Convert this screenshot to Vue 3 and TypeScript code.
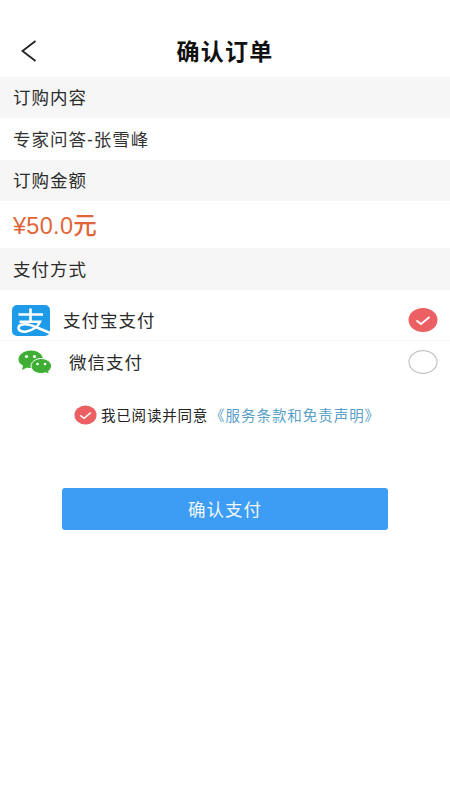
<script setup lang="ts">
const sections = { content: '专家问答-张雪峰', price: '¥50.0元' }
</script>

<template>
  <div class="page">
    <header class="nav">
      <svg class="back" viewBox="0 0 18 24" width="18" height="24" aria-hidden="true">
        <path d="M15.5 2 L2.5 12 L15.5 22" fill="none" stroke="#222" stroke-width="1.8" />
      </svg>
      <h1 class="title">确认订单</h1>
    </header>

    <div class="band">订购内容</div>
    <div class="line">{{ sections.content }}</div>
    <div class="band">订购金额</div>
    <div class="line price">{{ sections.price }}</div>
    <div class="band tall">支付方式</div>

    <div class="pay">
      <div class="pay-row ali">
        <svg class="ali-icon" viewBox="0 0 38 31" width="38" height="31" aria-hidden="true">
          <rect width="38" height="31" rx="5" fill="#1e9be8" />
          <path d="M6.5 9.5 H31 M18.5 3.5 V16.5 M7.5 16.8 H28 C26 21.5 20.5 25.5 14.5 26.5 C10 27.2 6.5 25.6 6.5 23 C6.5 20 11 18.6 16 19.6 C22 20.8 29 24.4 38 28"
            fill="none" stroke="#fff" stroke-width="2.6" />
        </svg>
        <span class="pay-name shift">支付宝支付</span>
        <svg class="radio" viewBox="0 0 30 24" width="30" height="24" aria-hidden="true">
          <ellipse cx="15" cy="12" rx="14.5" ry="12" fill="#ec5f63" />
          <path d="M8.5 12.5 L13 16 L21.5 9" fill="none" stroke="#fff" stroke-width="1.8" />
        </svg>
      </div>
      <div class="pay-row wx">
        <svg class="wx-icon" viewBox="0 0 34 24" width="34" height="24" aria-hidden="true">
          <path d="M13 0.5 C20 0.5 25 4.5 25 9.5 C25 14.5 20 18 13 18 C11.5 18 10 17.8 9 17.4 L4 20 L5 15.5 C2 14 0.5 12 0.5 9.5 C0.5 4.5 6 0.5 13 0.5 Z" fill="#3fae35" />
          <path d="M23 8.5 C29 8.5 33.5 12 33.5 16 C33.5 18.2 32.3 20 30.5 21.2 L31.5 24 L27.5 22.8 C26 23.3 24.6 23.5 23 23.5 C17.5 23.5 13 20.2 13 16 C13 12 17.5 8.5 23 8.5 Z" fill="#3fae35" stroke="#fff" stroke-width="1" />
          <circle cx="8.5" cy="6.5" r="1.6" fill="#fff" />
          <circle cx="16.5" cy="6.5" r="1.6" fill="#fff" />
          <circle cx="19.5" cy="14" r="1.3" fill="#fff" />
          <circle cx="27" cy="14" r="1.3" fill="#fff" />
        </svg>
        <span class="pay-name">微信支付</span>
        <svg class="radio" viewBox="0 0 30 24" width="30" height="24" aria-hidden="true">
          <ellipse cx="15" cy="12" rx="14" ry="11.4" fill="#fff" stroke="#c4c4c4" stroke-width="1.2" />
        </svg>
      </div>
    </div>

    <div class="agree">
      <svg viewBox="0 0 24 20" width="23" height="20" aria-hidden="true">
        <ellipse cx="12" cy="10" rx="11.5" ry="10" fill="#ec5f63" />
        <path d="M6.5 10.5 L10.5 13.5 L17.5 7.5" fill="none" stroke="#fff" stroke-width="1.6" />
      </svg>
      <span class="agree-text">我已阅读并同意</span>
      <span class="agree-link">《服务条款和免责声明》</span>
    </div>

    <button class="submit" type="button">确认支付</button>
  </div>
</template>

<style scoped>
.page {
  width: 450px;
  height: 800px;
  background: #fff;
  font-family: "Liberation Sans", "Noto Sans CJK SC", sans-serif;
  color: #2b2b2b;
  display: flex;
  flex-direction: column;
  overflow: hidden;
}
.nav {
  height: 77px;
  flex: none;
  display: grid;
  grid-template-columns: 1fr auto 1fr;
  align-items: center;
  padding-top: 25px;
  box-sizing: border-box;
}
.back {
  margin-left: 20px;
}
.title {
  margin: -3px 0 0;
  font-size: 23px;
  font-weight: 700;
  color: #111;
  letter-spacing: 1.2px;
}
.band {
  height: 41px;
  flex: none;
  background: #f6f6f6;
  padding: 0 0 2px 13px;
  box-sizing: border-box;
  display: flex;
  align-items: center;
  font-size: 17.5px;
  letter-spacing: 1px;
}
.tall {
  height: 42px;
}
.line {
  height: 42px;
  flex: none;
  padding: 0 0 2px 13px;
  box-sizing: border-box;
  display: flex;
  align-items: center;
  font-size: 17.5px;
  color: #333;
  letter-spacing: 1px;
}
.price {
  height: 47px;
  font-size: 23.5px;
  font-weight: 500;
  color: #e0663a;
  letter-spacing: 0.3px;
}
.pay {
  flex: none;
}
.pay-row {
  display: flex;
  align-items: center;
  padding-right: 12px;
  font-size: 17.5px;
}
.ali {
  height: 51px;
  padding: 10px 12px 0;
  border-bottom: 1px solid #f8f8f8;
  box-sizing: border-box;
}
.wx {
  height: 41px;
  padding-left: 18px;
}
.ali-icon {
  flex: none;
  margin-right: 13px;
}
.wx-icon {
  flex: none;
  margin-right: 17px;
}
.pay-name {
  flex: 1;
  letter-spacing: 1px;
}
.shift {
  margin-bottom: 2px;
}
.radio {
  flex: none;
}
.agree {
  margin-top: 23px;
  height: 20px;
  padding-left: 74px;
  display: flex;
  align-items: center;
  font-size: 14.5px;
  white-space: nowrap;
}
.agree-text {
  margin: 0 0 2px 4px;
  color: #222;
  letter-spacing: 0.8px;
}
.agree-link {
  margin: 0 0 2px 2px;
  color: #5a9fc9;
  letter-spacing: 0.95px;
}
.submit {
  margin: 63px 0 0 62px;
  width: 326px;
  height: 42px;
  flex: none;
  border: 0;
  border-radius: 3px;
  background: #3d9df5;
  color: #f2f7fb;
  font-family: inherit;
  font-size: 17.5px;
  letter-spacing: 1px;
  padding-bottom: 3px;
}
</style>
